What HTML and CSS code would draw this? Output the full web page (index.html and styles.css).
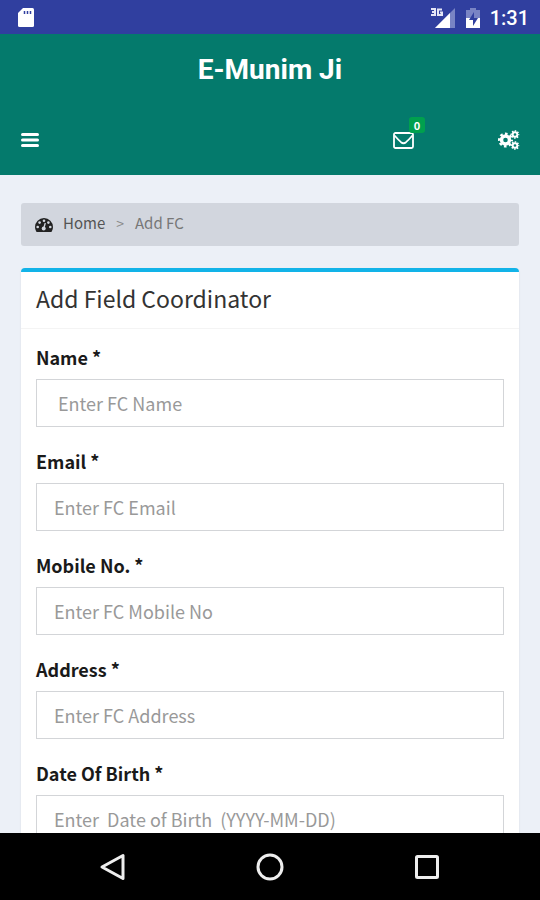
FILE: index.html
```html
<!DOCTYPE html>
<html lang="en">
<head>
<meta charset="utf-8">
<meta name="viewport" content="width=device-width, initial-scale=1">
<title>E-Munim Ji</title>
<link rel="stylesheet" href="styles.css">
</head>
<body>
<div class="status">
  <svg class="status-card" width="18" height="22" viewBox="0 0 18 22" aria-hidden="true"><path fill="#fff" d="M6 1h9.500q1.500 0 1.500 1.500v16q0 1.500-1.500 1.500h-13Q1 20 1 18.500V6z"/><path stroke="#303f9f" stroke-width="1.500" d="M7.500 4v3M10.500 4v3M13.500 4v3"/></svg>
  <div class="status-right">
    <svg width="26" height="22" viewBox="0 0 26 22" aria-hidden="true"><path fill="#7984c4" d="M25 1v20H5z"/><path fill="#fff" d="M20 6v15H5z"/><path fill="none" stroke="#e4e6f5" stroke-width="2" d="M1 2h4v3H2h3v3H1M12 2.500H8V8h4V5.500h-2"/></svg>
    <svg width="16" height="22" viewBox="0 0 16 22" aria-hidden="true"><path fill="#7984c4" d="M5 1h6v2h4v8H1V3h4z"/><path fill="#fff" d="M1 11h14v10H1z"/><path fill="#303f9f" d="M9 5l-5 8h4v6l5-8H9z"/></svg>
    <span class="clock">1:31</span>
  </div>
</div>
<header class="header">
  <a class="brand" href="#">E-Munim Ji</a>
  <nav class="toolbar">
    <button class="tool" type="button" aria-label="Menu"><svg width="18" height="16" viewBox="0 0 18 16"><path stroke="#fff" stroke-width="3" stroke-linecap="round" d="M1.500 2.500h15M1.500 8h15M1.500 13.500h15"/></svg></button>
    <div class="tools-right">
      <button class="tool" type="button" aria-label="Messages"><svg width="21" height="17" viewBox="0 0 21 17"><rect x="1" y="1" width="19" height="15" rx="1.500" fill="none" stroke="#fff" stroke-width="1.800"/><path fill="none" stroke="#fff" stroke-width="1.800" d="M1.500 3.500q3.500 4 6.500 6.700 2.500 2 5 0Q16 7.500 19.500 3.500"/></svg><span class="badge">0</span></button>
      <button class="tool" type="button" aria-label="Settings"><svg width="22" height="22" viewBox="0 0 22 22" fill="none" stroke="#fff"><circle cx="7.500" cy="11" r="4" stroke-width="3.400"/><circle cx="7.500" cy="11" r="6.300" stroke-width="2.400" stroke-dasharray="2.600 2.348" stroke-dashoffset="1.300"/><circle cx="17" cy="5.500" r="2.300" stroke-width="1.900"/><circle cx="17" cy="5.500" r="3.600" stroke-width="1.500" stroke-dasharray="1.500 1.327" stroke-dashoffset=".75"/><circle cx="17" cy="16.500" r="2.300" stroke-width="1.900"/><circle cx="17" cy="16.500" r="3.600" stroke-width="1.500" stroke-dasharray="1.500 1.327" stroke-dashoffset=".75"/></svg></button>
    </div>
  </nav>
</header>
<main class="content">
  <nav class="breadcrumb" aria-label="Breadcrumb">
    <svg width="18" height="14" viewBox="0 0 18 14" aria-hidden="true"><path fill="#222" d="M9 0a9 9 0 0 1 9 9q0 2.500-1.200 4.600-.2.400-.7.400H1.900q-.5 0-.7-.4Q0 11.500 0 9a9 9 0 0 1 9-9z"/><g fill="#d2d6de"><circle cx="2.700" cy="9" r="1.300"/><circle cx="4.600" cy="4.600" r="1.300"/><circle cx="9" cy="2.700" r="1.300"/><circle cx="13.400" cy="4.600" r="1.300"/><circle cx="15.300" cy="9" r="1.300"/><circle cx="8.700" cy="10.500" r="2"/></g><path stroke="#d2d6de" stroke-width="1.300" d="M8.700 10.500l1.600-5.500"/></svg>
    <a class="crumb" href="#">Home</a>
    <span class="separator">&gt;</span>
    <span class="current">Add FC</span>
  </nav>
  <form class="box">
    <h1 class="box-title">Add Field Coordinator</h1>
    <div class="box-body">
      <div class="field"><label for="name">Name *</label><input class="indented" id="name" type="text" placeholder="Enter FC Name"></div>
      <div class="field"><label for="email">Email *</label><input id="email" type="email" placeholder="Enter FC Email"></div>
      <div class="field"><label for="mobile">Mobile No. *</label><input id="mobile" type="tel" placeholder="Enter FC Mobile No"></div>
      <div class="field"><label for="address">Address *</label><input id="address" type="text" placeholder="Enter FC Address"></div>
      <div class="field"><label for="birth">Date Of Birth *</label><input id="birth" type="text" placeholder="Enter  Date of Birth  (YYYY-MM-DD)"></div>
    </div>
  </form>
</main>
<div class="system-nav">
  <button class="system-button" type="button" aria-label="Back"><svg width="28" height="28" viewBox="0 0 28 28"><path d="M24 2.500v23L3 14z"/></svg></button>
  <button class="system-button" type="button" aria-label="Home screen"><svg width="28" height="28" viewBox="0 0 28 28"><circle cx="14" cy="14" r="12"/></svg></button>
  <button class="system-button" type="button" aria-label="Recent apps"><svg width="28" height="28" viewBox="0 0 28 28"><rect x="3.500" y="3.500" width="21" height="21" rx="1"/></svg></button>
</div>
</body>
</html>
```
FILE: styles.css
```css
* {
  box-sizing: border-box;
}

body {
  margin: 0;
  height: 100vh;
  display: flex;
  flex-direction: column;
  background: #ecf0f7;
  color: #1a1a1a;
  font-family: "Noto Sans CJK SC", "Noto Sans", sans-serif;
  font-size: 18px;
}

svg {
  display: block;
  flex: none;
}

button {
  padding: 0;
  border: 0;
  background: none;
  cursor: pointer;
}

.status {
  flex: none;
  display: flex;
  align-items: center;
  justify-content: space-between;
  height: 34px;
  padding: 2px 11px 0 17px;
  background: #303f9f;
}

.status-right {
  display: flex;
  align-items: center;
  gap: 9px;
}

.clock {
  color: #fff;
  font: 500 20px/32px Roboto, sans-serif;
}

.header {
  flex: none;
  padding-top: 1px;
  background: #047a6c;
}

.brand {
  display: block;
  color: #fff;
  font: 700 28px/70px Roboto, sans-serif;
  text-align: center;
  text-decoration: none;
}

.toolbar {
  display: flex;
  align-items: center;
  justify-content: space-between;
  height: 70px;
  padding: 0 20px 0 21px;
}

.tools-right {
  display: flex;
  align-items: center;
  gap: 84px;
}

.tool {
  position: relative;
}

.badge {
  position: absolute;
  top: -15px;
  right: -11px;
  width: 16px;
  border-radius: 3px;
  background: #00a04e;
  color: #fff;
  font: 700 11px/16px "Noto Sans CJK SC", sans-serif;
}

.content {
  flex: 1;
  min-height: 0;
  overflow: hidden;
  padding: 28px 21px 0;
}

.breadcrumb {
  display: flex;
  align-items: center;
  height: 43px;
  margin-bottom: 22px;
  padding: 0 14px;
  border-radius: 3px;
  background: #d2d6de;
  font-size: 15px;
  line-height: 20px;
}

.crumb,
.separator,
.current {
  padding-bottom: 3px;
}

.crumb {
  margin-left: 10px;
  color: #555;
  text-decoration: none;
}

.separator {
  margin: 0 11px;
  color: #888;
  font-size: 14px;
}

.current {
  color: #777;
}

.box {
  border-top: 4px solid #12b3e8;
  border-radius: 4px;
  background: #fff;
  box-shadow: 0 1px 2px rgba(0, 0, 0, 0.1);
}

.box-title {
  margin: 0;
  padding: 0 15px 4px;
  border-bottom: 1px solid #f4f4f4;
  color: #333;
  font-size: 23px;
  font-weight: 400;
  line-height: 52px;
}

.box-body {
  padding: 18px 15px;
}

.field {
  margin-bottom: 24px;
}

.field label {
  display: block;
  margin-bottom: 12px;
  font-weight: 700;
  line-height: 20px;
}

.field input {
  display: block;
  width: 100%;
  height: 48px;
  padding: 0 17px;
  border: 1px solid #d3d5d8;
  border-radius: 0;
  background: #fff;
  color: #555;
  font: inherit;
}

.field .indented {
  padding-left: 21px;
}

.field input::placeholder {
  color: #999;
}

.system-nav {
  flex: none;
  display: flex;
  justify-content: center;
  gap: 129px;
  height: 67px;
  background: #000;
}

.system-button svg {
  fill: none;
  stroke: #eee;
  stroke-width: 3;
  stroke-linejoin: round;
}
```
